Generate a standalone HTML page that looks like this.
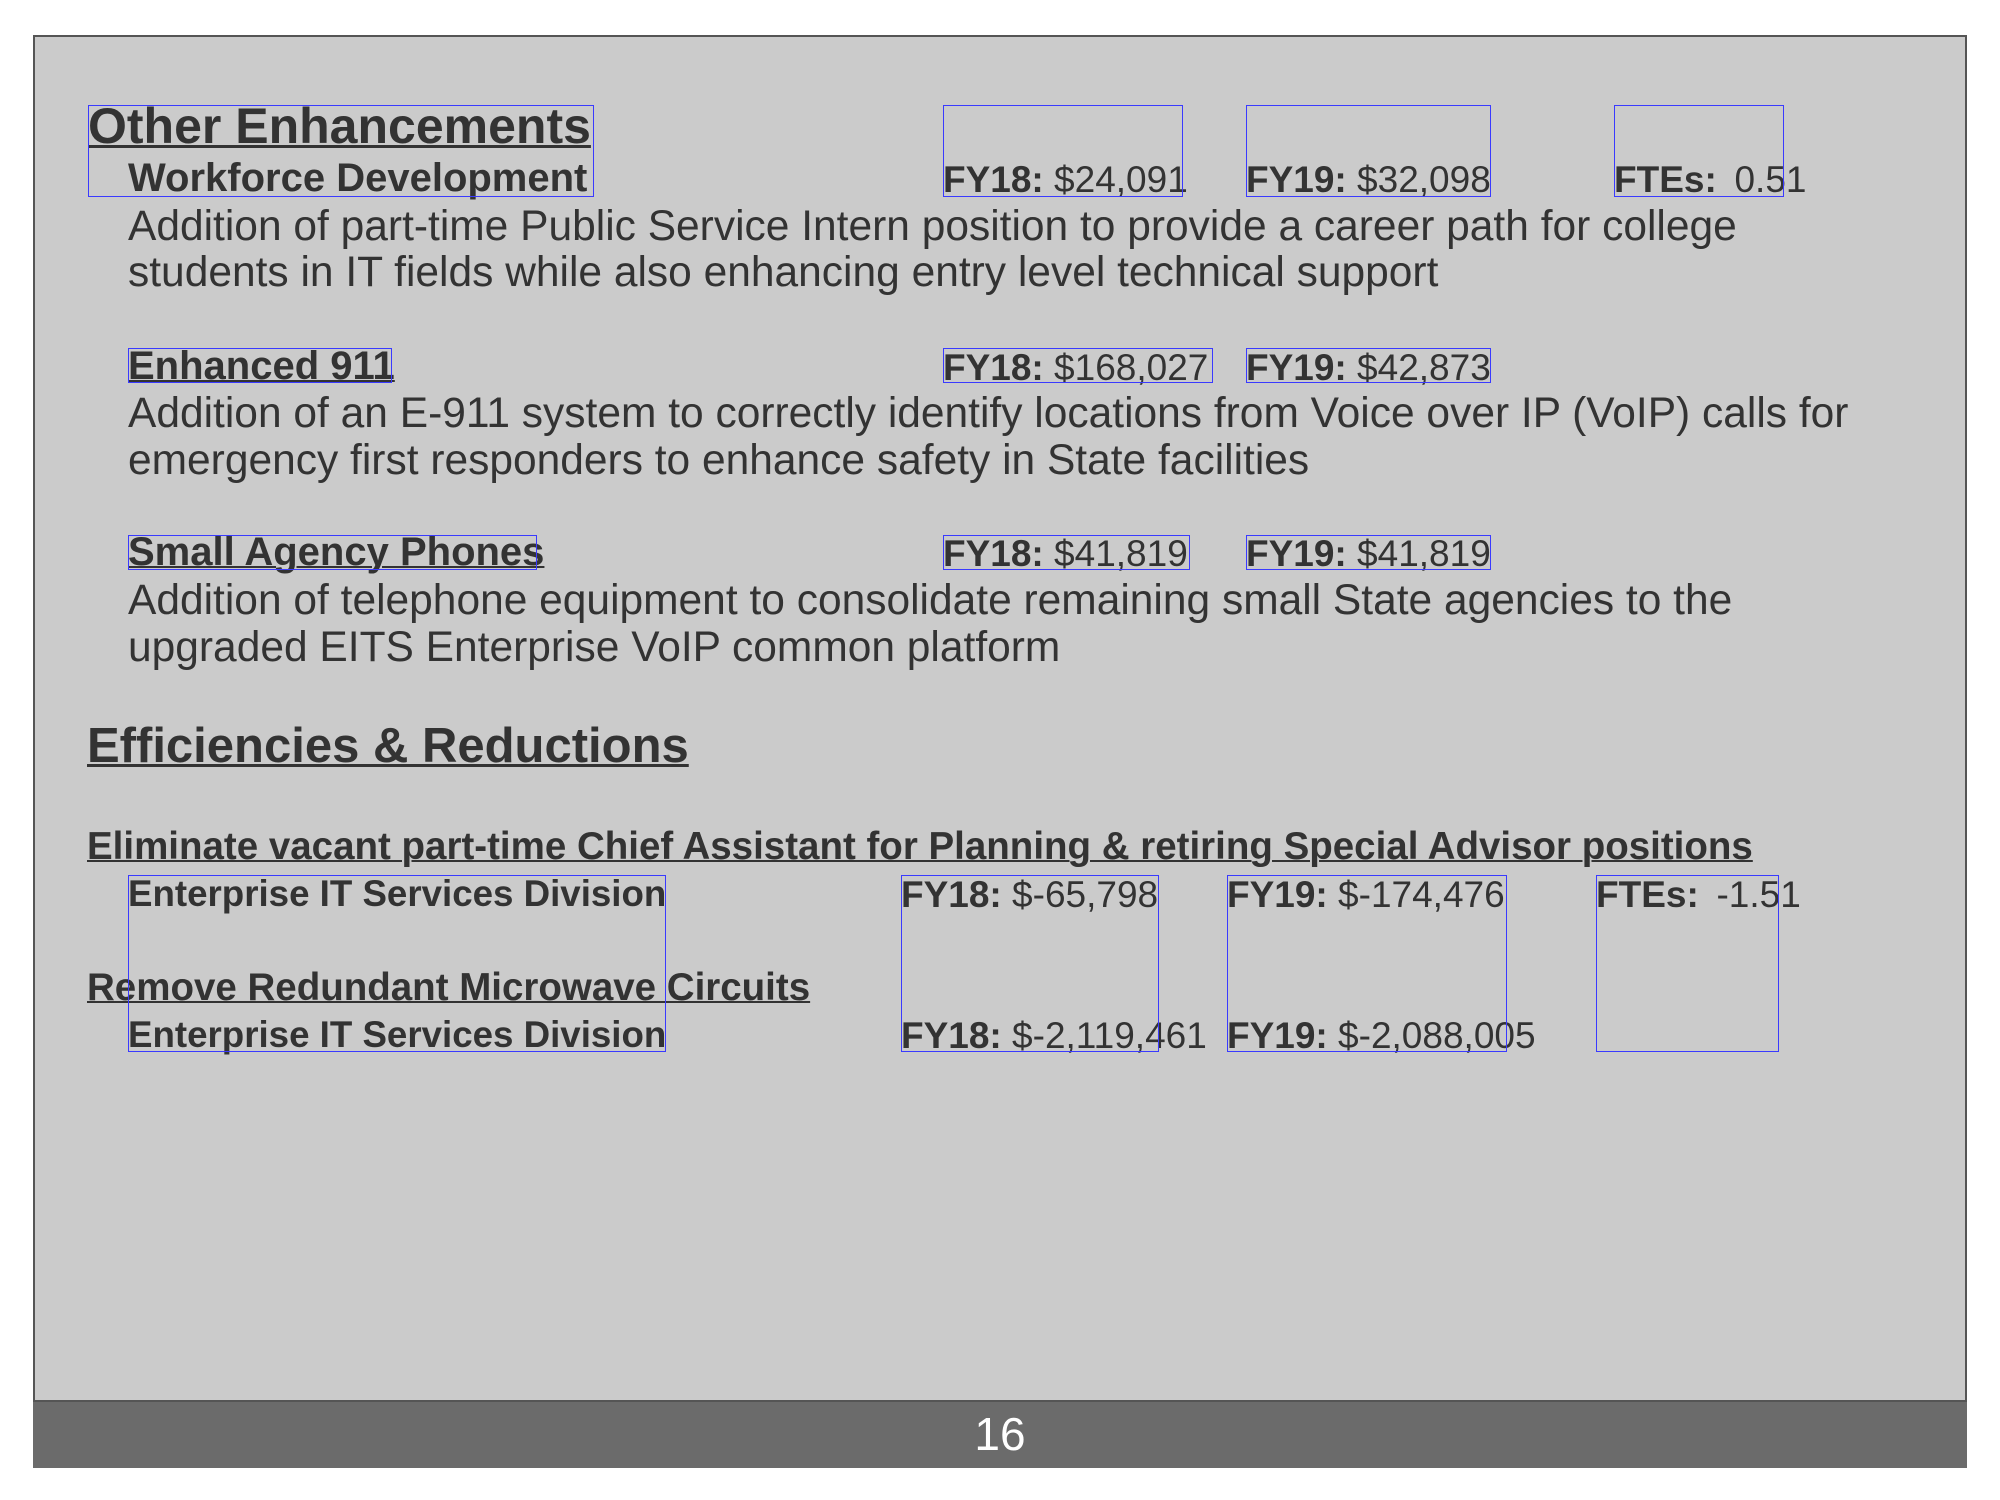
<!DOCTYPE html>
<html><head><meta charset="utf-8"><style>
html,body{margin:0;padding:0;background:#fff;width:2000px;height:1500px;overflow:hidden}
body{position:relative;font-family:"Liberation Sans",Arial,sans-serif;color:#333}
#slide{position:absolute;left:33px;top:35px;width:1934px;height:1432px;background:#cbcbcb;border:2px solid #555;box-sizing:border-box}
#foot{position:absolute;left:33px;top:1400px;width:1934px;height:68px;background:#6b6b6b;border-top:2px solid #555;box-sizing:border-box;color:#fff;font-size:46px;text-align:center;line-height:64px}
.t{position:absolute;white-space:nowrap;line-height:1}
.h{font-size:50px;font-weight:bold;text-decoration:underline;text-decoration-thickness:3px}
.s{font-size:40px;font-weight:bold}
.e{font-size:36.7px;font-weight:bold}
.u{text-decoration:underline;text-decoration-thickness:2px}
.b{font-size:42.5px}
.v{font-size:37px}
.v b{font-weight:bold}
.x{font-size:38.5px;font-weight:bold;text-decoration:underline;text-decoration-thickness:2px}
.bx{position:absolute;border:1px solid #3a3aff;box-sizing:border-box}
</style></head><body>
<div id="slide"></div>
<div id="foot">16</div>

<div class="t h" style="left:88px;top:101px">Other Enhancements</div>
<div class="t s" style="left:128px;top:158px">Workforce Development</div>
<div class="t v" style="left:943px;top:161px"><b>FY18:</b> $24,091</div>
<div class="t v" style="left:1246px;top:161px"><b>FY19:</b> $32,098</div>
<div class="t v" style="left:1614px;top:161px"><b>FTEs:</b> &thinsp;0.51</div>
<div class="t b" style="left:128px;top:206px">Addition of part-time Public Service Intern position to provide a career path for college</div>
<div class="t b" style="left:128px;top:252px">students in IT fields while also enhancing entry level technical support</div>

<div class="t s u" style="left:128px;top:346px">Enhanced 911</div>
<div class="t v" style="left:943px;top:349px"><b>FY18:</b> $168,027</div>
<div class="t v" style="left:1246px;top:349px"><b>FY19:</b> $42,873</div>
<div class="t b" style="left:128px;top:393px">Addition of an E-911 system to correctly identify locations from Voice over IP (VoIP) calls for</div>
<div class="t b" style="left:128px;top:440px">emergency first responders to enhance safety in State facilities</div>

<div class="t s u" style="left:128px;top:532px">Small Agency Phones</div>
<div class="t v" style="left:943px;top:535px"><b>FY18:</b> $41,819</div>
<div class="t v" style="left:1246px;top:535px"><b>FY19:</b> $41,819</div>
<div class="t b" style="left:128px;top:580px">Addition of telephone equipment to consolidate remaining small State agencies to the</div>
<div class="t b" style="left:128px;top:627px">upgraded EITS Enterprise VoIP common platform</div>

<div class="t h" style="left:87px;top:722px;font-size:49px">Efficiencies &amp; Reductions</div>
<div class="t x" style="left:87px;top:828px">Eliminate vacant part-time Chief Assistant for Planning &amp; retiring Special Advisor positions</div>
<div class="t e" style="left:128px;top:876px">Enterprise IT Services Division</div>
<div class="t v" style="left:901px;top:876px"><b>FY18:</b> $-65,798</div>
<div class="t v" style="left:1227px;top:876px"><b>FY19:</b> $-174,476</div>
<div class="t v" style="left:1596px;top:876px"><b>FTEs:</b> &thinsp;-1.51</div>
<div class="t x" style="left:87px;top:969px">Remove Redundant Microwave Circuits</div>
<div class="t e" style="left:128px;top:1017px">Enterprise IT Services Division</div>
<div class="t v" style="left:901px;top:1017px"><b>FY18:</b> $-2,119,461</div>
<div class="t v" style="left:1227px;top:1017px"><b>FY19:</b> $-2,088,005</div>

<div class="bx" style="left:88px;top:105px;width:506px;height:92px"></div>
<div class="bx" style="left:943px;top:105px;width:240px;height:92px"></div>
<div class="bx" style="left:1246px;top:105px;width:245px;height:92px"></div>
<div class="bx" style="left:1614px;top:105px;width:170px;height:92px"></div>
<div class="bx" style="left:128px;top:348px;width:264px;height:35px"></div>
<div class="bx" style="left:943px;top:348px;width:270px;height:35px"></div>
<div class="bx" style="left:1246px;top:348px;width:245px;height:35px"></div>
<div class="bx" style="left:128px;top:535px;width:409px;height:35px"></div>
<div class="bx" style="left:943px;top:535px;width:247px;height:35px"></div>
<div class="bx" style="left:1246px;top:535px;width:245px;height:35px"></div>
<div class="bx" style="left:128px;top:875px;width:538px;height:177px"></div>
<div class="bx" style="left:901px;top:875px;width:258px;height:177px"></div>
<div class="bx" style="left:1227px;top:875px;width:280px;height:177px"></div>
<div class="bx" style="left:1596px;top:875px;width:183px;height:177px"></div>
</body></html>
